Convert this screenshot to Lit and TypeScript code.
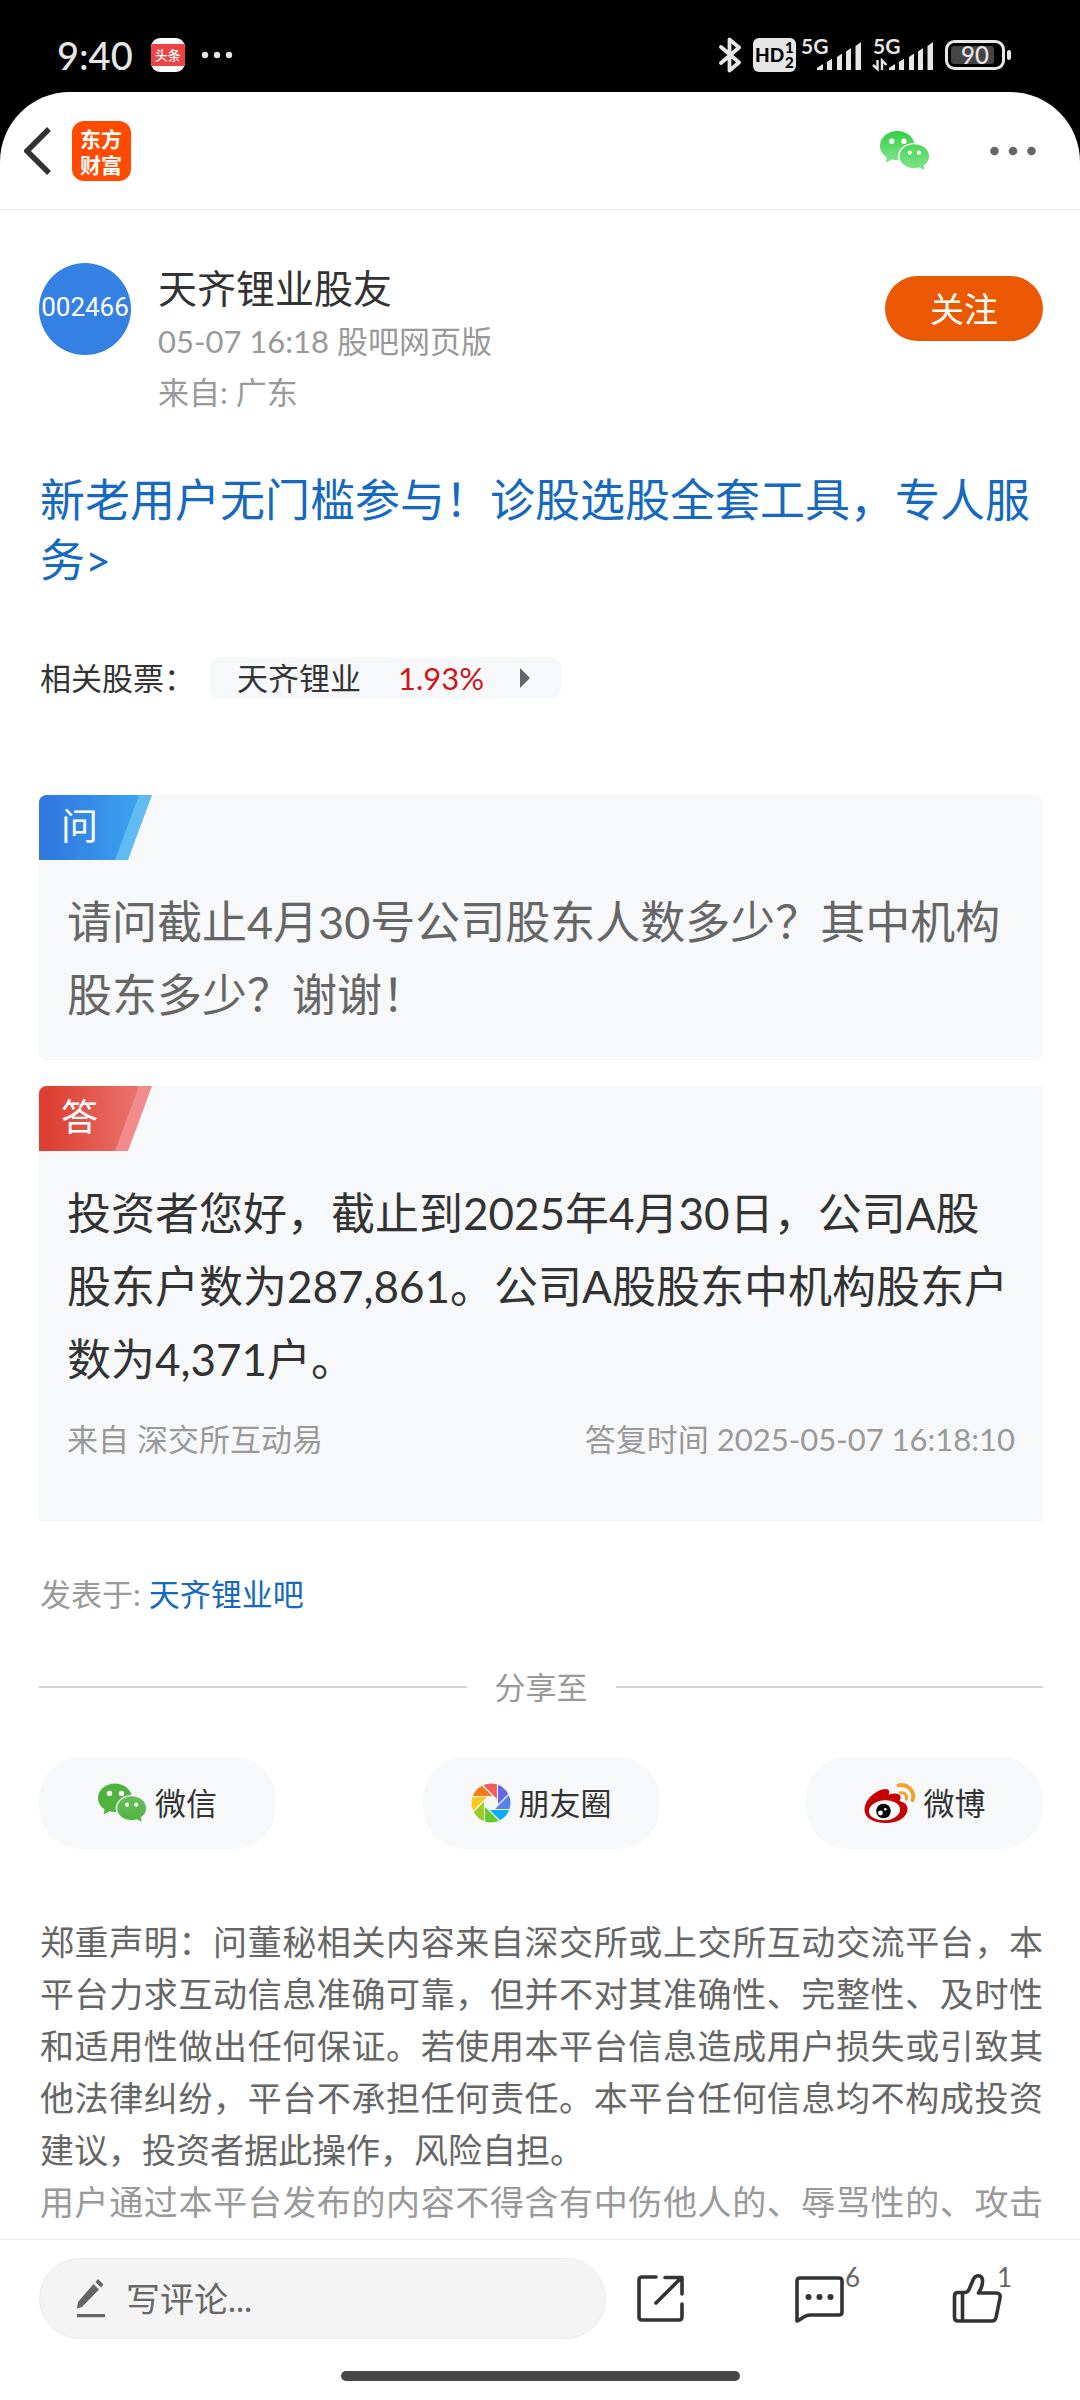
import { LitElement, html, css, svg } from "lit";
import { customElement, property } from "lit/decorators.js";

const wechat = (id: string, stops: [string, string], gap: string) => html`
  <svg viewBox="0 0 50 40" aria-hidden="true">
    <defs>
      <linearGradient id=${id} x1="0" y1="0" x2="0" y2="1">
        <stop offset="0" stop-color=${stops[0]} />
        <stop offset="1" stop-color=${stops[1]} />
      </linearGradient>
      <linearGradient id="${id}-b" x1="0" y1="0" x2="0" y2="1">
        <stop offset="0" stop-color=${stops[0]} stop-opacity=".85" />
        <stop offset="1" stop-color=${stops[1]} />
      </linearGradient>
    </defs>
    <path fill="url(#${id})" d="M17.3 0C7.7 0 0 6.600 0 14.800c0 4.800 2.600 8.900 6.700 11.600L5.800 31.600l6.200-3.100c1.700.5 3.500.8 5.300.8 9.600 0 17.300-6.600 17.300-14.600S26.900 0 17.300 0z" />
    <ellipse cx="34.300" cy="25.300" rx="16.200" ry="13.400" fill=${gap} />
    <path fill=${gap} d="M38 36l7.200 5 .8-8z" />
    <path fill="url(#${id}-b)" d="M34.300 13.200c-8.200 0-14.800 5.400-14.800 12.100s6.600 12.100 14.800 12.100c1.900 0 3.700-.3 5.300-.8l4.800 2.600-.7-4.600c3.200-2.200 5.400-5.500 5.400-9.300 0-6.700-6.600-12.100-14.800-12.100z" />
    <g fill="#fff">
      <circle cx="11.800" cy="10.200" r="2.700" /><circle cx="24" cy="10.200" r="2.700" />
      <circle cx="29.700" cy="21.700" r="2.100" /><circle cx="39" cy="21.700" r="2.100" />
    </g>
  </svg>`;

const blades = ["#f45b57", "#6368e5", "#5482ea", "#09aefb", "#66c925", "#9bcb2b", "#fec71d", "#fa7a1e"];

const moments = html`
  <svg viewBox="0 0 40 40" aria-hidden="true">
    ${blades.map((c, i) => svg`<path fill=${c} stroke="#f7f8fa" stroke-width="1.100"
      transform="rotate(${i * 45} 20 20)" d="M26.500 17.300L11.200 2A20 20 0 0 1 26.500 1.100z" />`)}
  </svg>`;

const weibo = html`
  <svg viewBox="0 0 51 40" aria-hidden="true">
    <path fill="#c80000" d="M0 27C0 20 5 13 12 9c5-3 10-4 12-2 1 1 1 3 0 5 4-2 9-2 11 0 2 1.500 1 4 0 6 4 1 8 3 8 8 0 8-9 14-22 14C9 40 0 35 0 27z" />
    <ellipse cx="20" cy="27.300" rx="15.600" ry="10" fill="#fff" transform="rotate(-5 20 27)" />
    <circle cx="19" cy="28" r="7.300" fill="#000" />
    <circle cx="16" cy="30" r="2.400" fill="#fff" /><circle cx="20.800" cy="26.200" r="1.300" fill="#fff" />
    <g fill="none" stroke="#f5a22d" stroke-linecap="round">
      <path stroke-width="3.800" d="M34 2.300C43 .5 51 8 48 17.300" />
      <path stroke-width="3" d="M36 9.800c4-.8 7 2.700 5.800 6.200" />
    </g>
  </svg>`;

const bars = svg`
  <path fill="#e6e6e6" d="M16 27l6-4v6h-6zM26 21l5-3.500V29h-5zM36 16l5-3.500V29h-5zM45 10.500l5-3.500v22h-5zM54.500 5l5.500-4v28h-5.500z" />`;

const signal = (data: boolean) => html`
  <svg class="signal" viewBox="0 -3 60 34" aria-hidden="true">
    <text class="tiny" x="0" y="13">5G</text>
    ${bars}
    ${data ? svg`<path fill="none" stroke="#e6e6e6" stroke-width="2.400" d="M4.500 19v9L0 24M9 29v-9.500L13.500 24" />` : null}
  </svg>`;

@customElement("status-bar")
export class StatusBar extends LitElement {
  static styles = css`
    :host { display: flex; align-items: center; height: 92px; padding: 18px 69px 0 57px; box-sizing: border-box;
      color: #e6e6e6; font-family: Lato, "Noto Sans CJK SC", sans-serif; }
    .time { font-size: 38px; line-height: 40px; font-weight: 500; }
    .news { width: 34px; height: 34px; margin-left: 18px; border-radius: 9px; background: #fff; overflow: hidden;
      display: flex; align-items: center; }
    .ribbon { flex: 1; background: #ef4343; color: #fff; font: 500 13px/22px "Noto Sans CJK SC", sans-serif; text-align: center; }
    .dots { width: 32px; height: 8px; margin-left: 16px; fill: #e6e6e6; }
    .right { margin-left: auto; display: flex; align-items: center; gap: 12px; }
    .bt { width: 22px; height: 36px; }
    .pair { display: flex; align-items: center; gap: 5px; }
    .hd { width: 43px; height: 34px; }
    .signal { width: 60px; height: 34px; overflow: visible; }
    .battery { width: 66px; height: 30px; }
    text { font-family: Lato, sans-serif; }
    .tiny { font-size: 21px; font-weight: 700; fill: #e6e6e6; }
    .big { font-size: 19px; font-weight: 900; fill: #000; }
    .small { font-size: 15px; font-weight: 900; fill: #000; }
    .level { font-size: 24px; font-weight: 500; fill: #e6e6e6; }
  `;
  render() {
    return html`
      <span class="time">9:40</span>
      <span class="news"><span class="ribbon">头条</span></span>
      <svg class="dots" viewBox="0 0 32 8" aria-hidden="true"><circle cx="4" cy="4" r="3.200"/><circle cx="16" cy="4" r="3.200"/><circle cx="28" cy="4" r="3.200"/></svg>
      <span class="right">
        <svg class="bt" viewBox="0 0 22 36" aria-hidden="true">
          <path fill="none" stroke="#e6e6e6" stroke-width="3.800" stroke-linejoin="round" stroke-linecap="round" d="M2 10l18 15.500-9.500 8V2.500l9.500 8L2 26" />
        </svg>
        <span class="pair">
          <svg class="hd" viewBox="0 0 43 34" aria-hidden="true">
            <rect width="43" height="34" rx="6" fill="#e6e6e6" />
            <text class="big" x="2" y="24">HD</text>
            <text class="small" x="32" y="15">1</text><text class="small" x="32" y="30">2</text>
          </svg>
          ${signal(false)}
        </span>
        ${signal(true)}
        <svg class="battery" viewBox="0 0 66 30" aria-hidden="true">
          <rect x="1.500" y="1.500" width="57" height="27" rx="8" fill="none" stroke="#e6e6e6" stroke-width="3" />
          <rect x="6" y="6" width="43" height="18" rx="3" fill="#444" />
          <rect x="62" y="10" width="4" height="10" rx="2" fill="#e6e6e6" />
          <text class="level" x="30" y="24" text-anchor="middle">90</text>
        </svg>
      </span>`;
  }
}

@customElement("qa-card")
export class QaCard extends LitElement {
  @property() kind: "ask" | "reply" = "ask";
  @property() tag = "";
  static styles = css`
    :host { display: block; background: #f7f8fa; border-radius: 8px; }
    :host([kind="reply"]) { border-radius: 8px 0 0 0; }
    .flag { position: relative; width: 113px; height: 65px; display: block; overflow: hidden; border-top-left-radius: 8px; }
    .shape { position: absolute; inset: 0; width: 100%; height: 100%; }
    .label { position: relative; display: block; padding-left: 22px; color: #fff; font-size: 37px; line-height: 62px; }
    .text { margin: 0; padding: 26px 28px 28px; font-size: 45px; line-height: 73px; color: #666; }
    :host([kind="reply"]) .text { padding-bottom: 17px; font-size: 44px; color: #333; }
  `;
  render() {
    const [from, to, edge] = this.kind === "ask" ? ["#3079e0", "#3ba3f0", "#5fbbf0"] : ["#dd4032", "#ea746d", "#f28c8c"];
    return html`
      <span class="flag">
        <svg class="shape" viewBox="0 0 113 66" preserveAspectRatio="none" aria-hidden="true">
          <defs><linearGradient id="g"><stop offset=".1" stop-color=${from} /><stop offset="1" stop-color=${to} /></linearGradient></defs>
          <path fill=${edge} d="M0 0h113L89 66H0z" />
          <path fill="url(#g)" d="M0 0h100L76 66H0z" />
        </svg>
        <span class="label">${this.tag}</span>
      </span>
      <p class="text"><slot></slot></p>
      <slot name="meta"></slot>`;
  }
}

@customElement("app-root")
export class AppRoot extends LitElement {
  static styles = css`
    :host { display: flex; flex-direction: column; min-height: 100vh; background: #000;
      font-family: Lato, "Noto Sans CJK SC", sans-serif; font-size: 31px; line-height: 52px; color: #333; }
    * { box-sizing: border-box; }
    button { border: 0; padding: 0; background: none; font: inherit; color: inherit; cursor: pointer; }
    a { color: #1569c0; text-decoration: none; }
    svg { display: block; width: 100%; height: 100%; }
    .screen { flex: 1; display: flex; flex-direction: column; background: #fff; border-radius: 70px 70px 0 0; overflow: hidden; }
    .top { display: flex; align-items: center; height: 118px; padding: 0 44px 0 24px; border-bottom: 1px solid #ebebeb; }
    .back { width: 27px; height: 48px; margin-right: 21px; }
    .logo { width: 59px; height: 60px; padding: 4px 8px 0; border-radius: 12px; background: #ff4a00; color: #fff;
      font: 700 21px/26px "Noto Sans CJK SC", sans-serif; }
    .wx { width: 50px; height: 40px; margin-left: auto; }
    .more { width: 46px; height: 40px; margin-left: 60px; fill: #666; }
    .page { padding: 50px 37px 8px 39px; }
    .author { display: flex; align-items: flex-start; }
    .avatar { width: 92px; height: 92px; margin-top: 3px; border-radius: 50%; background: #3480e3; color: #fff;
      font: 400 26px/88px Roboto, sans-serif; text-align: center; flex: none; }
    .who { flex: 1; padding-left: 27px; line-height: 51px; color: #999; }
    .name { font-size: 39px; line-height: 56px; font-weight: 400; margin: 0; color: #333; }
    .follow { width: 158px; height: 65px; margin-top: 16px; border-radius: 33px; background: #eb5802; color: #fff; font-size: 34px; }
    .promo { display: block; margin-top: 52px; padding-left: 1px; font-size: 45px; line-height: 60px; }
    .stocks { display: flex; align-items: center; margin-top: 67px; line-height: 42px; }
    .stocks-label { padding-left: 1px; width: 171px; }
    .stock { display: flex; align-items: center; padding: 0 31px 0 27px; border-radius: 10px; background: #f7f8fa; color: #333; }
    .pct { margin-left: 37px; color: #d0161b; }
    .arrow { width: 10px; height: 20px; margin-left: 36px; fill: #666; }
    .cards { display: grid; gap: 26px; margin-top: 96px; }
    .meta { display: flex; justify-content: space-between; padding: 0 28px 56px; color: #999; }
    .posted { margin: 47px 0 0 1px; color: #999; }
    .share-title { display: flex; align-items: center; gap: 28px; margin-top: 41px; color: #999; }
    .rule { flex: 1; height: 2px; background: #d5d5d5; }
    .share { display: flex; justify-content: space-between; margin-top: 44px; }
    .pill { display: flex; align-items: center; justify-content: center; gap: 8px; width: 237px; height: 92px; border-radius: 42px; background: #f7f8fa; }
    .ic { height: 40px; }
    .w48 { width: 49px; }
    .w40 { width: 40px; }
    .w51 { width: 52px; }
    .legal { margin: 67px 0 0 1px; font-size: 34px; line-height: 52px; text-align: justify; color: #666; }
    .rules { margin: 0 0 0 1px; font-size: 34px; line-height: 52px; text-align: justify; text-align-last: justify; color: #999; }
    .bottom { margin-top: auto; padding: 18px 39px 19px; border-top: 1px solid #ebebeb; }
    .tools { display: flex; align-items: center; }
    .write { flex: 1; min-width: 0; display: flex; align-items: center; height: 81px; padding: 0 37px; border: 1px solid #ececec; border-radius: 41px; background: #f4f4f4; }
    .pen { width: 28px; height: 39px; flex: none; fill: #666; }
    .field { flex: 1; min-width: 0; margin-left: 21px; padding: 0; border: 0; outline: 0; background: none; font: inherit; font-size: 34px; color: #333; }
    .field::placeholder { color: #666; opacity: 1; }
    .acts { display: flex; gap: 110px; padding: 0 40px 0 31px; }
    .act { position: relative; width: 48px; height: 48px; }
    .act svg { fill: none; stroke: #333; stroke-width: 3.600px; stroke-linecap: round; stroke-linejoin: round; overflow: visible; }
    .act .solid { fill: #333; stroke: none; }
    .count { position: absolute; left: 100%; bottom: 100%; margin: 0 0 -18px 2px; font-size: 26px; line-height: 32px; color: #666; }
    .tight { margin-left: -4px; }
    .home { width: 399px; max-width: 60%; height: 10px; margin: 32px auto 0; border-radius: 5px; background: #474747; }
  `;
  render() {
    return html`
      <status-bar></status-bar>
      <div class="screen">
        <header class="top">
          <button class="back" aria-label="返回">
            <svg viewBox="0 0 27 48"><path d="M25 2L3 24l22 22" fill="none" stroke="#333" stroke-width="5.500" /></svg>
          </button>
          <a class="logo" href="#">东方财富</a>
          <button class="wx" aria-label="微信">${wechat("top", ["#2fd043", "#86e48f"], "#fff")}</button>
          <button class="more" aria-label="更多">
            <svg viewBox="0 0 46 40"><circle cx="4.500" cy="20" r="4.300"/><circle cx="23" cy="20" r="4.300"/><circle cx="41.500" cy="20" r="4.300"/></svg>
          </button>
        </header>
        <main class="page">
          <section class="author">
            <div class="avatar">002466</div>
            <div class="who">
              <h1 class="name">天齐锂业股友</h1>
              <div>05-07 16:18 股吧网页版</div>
              <div>来自: 广东</div>
            </div>
            <button class="follow">关注</button>
          </section>
          <a class="promo" href="#">新老用户无门槛参与！诊股选股全套工具，专人服务&gt;</a>
          <div class="stocks">
            <span class="stocks-label">相关股票：</span>
            <a class="stock" href="#">天齐锂业<span class="pct">1.93%</span>
              <svg class="arrow" viewBox="0 0 10 20"><path d="M0 0l10 10L0 20z" /></svg></a>
          </div>
          <div class="cards">
            <qa-card kind="ask" tag="问">请问截止4月30号公司股东人数多少？其中机构股东多少？谢谢！</qa-card>
            <qa-card kind="reply" tag="答">投资者您好，截止到2025年4月30日，公司A股股东户数为287,861。公司A股股东中机构股东户数为4,371户。
              <div class="meta" slot="meta"><span>来自 深交所互动易</span><span>答复时间 2025-05-07 16:18:10</span></div>
            </qa-card>
          </div>
          <div class="posted">发表于: <a href="#">天齐锂业吧</a></div>
          <div class="share-title"><span class="rule"></span>分享至<span class="rule"></span></div>
          <div class="share">
            <button class="pill"><span class="ic w48">${wechat("pill", ["#50b340", "#50b340"], "#f7f8fa")}</span>微信</button>
            <button class="pill"><span class="ic w40">${moments}</span>朋友圈</button>
            <button class="pill"><span class="ic w51">${weibo}</span>微博</button>
          </div>
          <p class="legal">郑重声明：问董秘相关内容来自深交所或上交所互动交流平台，本平台力求互动信息准确可靠，但并不对其准确性、完整性、及时性和适用性做出任何保证。若使用本平台信息造成用户损失或引致其他法律纠纷，平台不承担任何责任。本平台任何信息均不构成投资建议，投资者据此操作，风险自担。</p>
          <p class="rules">用户通过本平台发布的内容不得含有中伤他人的、辱骂性的、攻击</p>
        </main>
        <footer class="bottom">
          <div class="tools">
            <label class="write">
              <svg class="pen" viewBox="0 0 28 39" aria-hidden="true">
                <path d="M16.500 5l5.500 5.500L5 28 0 29.500 1 23zM18.500 3l2.500-3 5.500 5.500-2.500 3zM0 35h28v3.200H0z" />
              </svg>
              <input class="field" type="text" placeholder="写评论..." aria-label="写评论" />
            </label>
            <div class="acts">
              <button class="act" aria-label="分享">
                <svg viewBox="0 0 48 48"><path d="M19 2H5q-3 0-3 3v37q0 3 3 3h37q3 0 3-3V29M28 2.500h17V19M44 3L19 28" /></svg>
              </button>
              <button class="act" aria-label="评论">
                <svg viewBox="0 0 48 48"><path d="M5 3h39q3 0 3 3v31q0 3-3 3H15C9 40 6 45 2 46V6q0-3 3-3z" />
                  <g class="solid"><circle cx="13.500" cy="22" r="3"/><circle cx="24.500" cy="22" r="3"/><circle cx="35.500" cy="22" r="3"/></g></svg>
                <span class="count">6</span>
              </button>
              <button class="act" aria-label="点赞">
                <svg viewBox="0 0 48 48"><path d="M1.500 21q0-3.500 3.500-3.500h7Q14.500 17.500 16 14.500L20.500 4C23-.5 29-.5 29.500 5 30 10 28 14 25.500 18H43q5 0 4 5l-4 19.500Q42.300 46 39 46H5q-3.500 0-3.500-3.500zM9.500 18v28" /></svg>
                <span class="count tight">1</span>
              </button>
            </div>
          </div>
          <div class="home"></div>
        </footer>
      </div>`;
  }
}
